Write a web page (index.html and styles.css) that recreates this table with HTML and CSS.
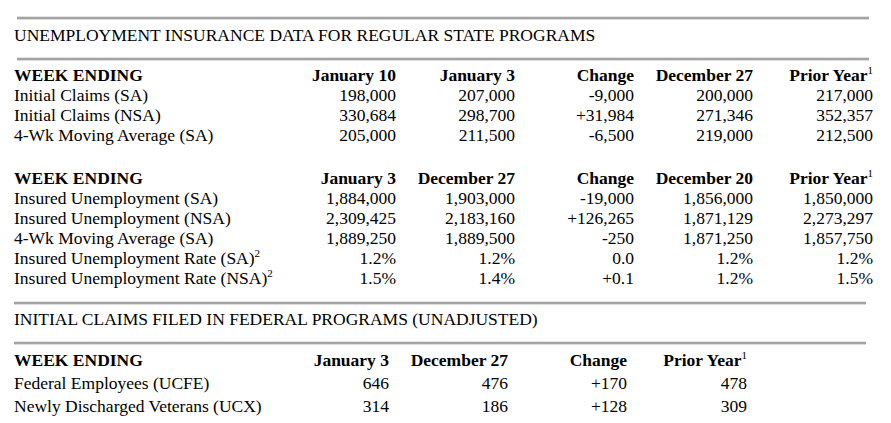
FILE: index.html
```html
<!DOCTYPE html>
<html lang="en">
<head>
<meta charset="utf-8">
<title>Unemployment Insurance Data</title>
<link rel="stylesheet" href="styles.css">
</head>
<body>
<div class="page">
  <section class="block state">
    <div class="rule"></div>
    <h2 class="title">UNEMPLOYMENT INSURANCE DATA FOR REGULAR STATE PROGRAMS</h2>
    <div class="rule"></div>
    <div class="grid g5 first">
      <div class="h l">WEEK ENDING</div><div class="h">January 10</div><div class="h">January 3</div><div class="h">Change</div><div class="h">December 27</div><div class="h">Prior Year<sup>1</sup></div>
      <div class="l">Initial Claims (SA)</div><div>198,000</div><div>207,000</div><div>-9,000</div><div>200,000</div><div>217,000</div>
      <div class="l">Initial Claims (NSA)</div><div>330,684</div><div>298,700</div><div>+31,984</div><div>271,346</div><div>352,357</div>
      <div class="l">4-Wk Moving Average (SA)</div><div>205,000</div><div>211,500</div><div>-6,500</div><div>219,000</div><div>212,500</div>
    </div>
    <div class="grid g5 second">
      <div class="h l">WEEK ENDING</div><div class="h">January 3</div><div class="h">December 27</div><div class="h">Change</div><div class="h">December 20</div><div class="h">Prior Year<sup>1</sup></div>
      <div class="l">Insured Unemployment (SA)</div><div>1,884,000</div><div>1,903,000</div><div>-19,000</div><div>1,856,000</div><div>1,850,000</div>
      <div class="l">Insured Unemployment (NSA)</div><div>2,309,425</div><div>2,183,160</div><div>+126,265</div><div>1,871,129</div><div>2,273,297</div>
      <div class="l">4-Wk Moving Average (SA)</div><div>1,889,250</div><div>1,889,500</div><div>-250</div><div>1,871,250</div><div>1,857,750</div>
      <div class="l">Insured Unemployment Rate (SA)<sup>2</sup></div><div>1.2%</div><div>1.2%</div><div>0.0</div><div>1.2%</div><div>1.2%</div>
      <div class="l">Insured Unemployment Rate (NSA)<sup>2</sup></div><div>1.5%</div><div>1.4%</div><div>+0.1</div><div>1.2%</div><div>1.5%</div>
    </div>
  </section>
  <section class="block federal">
    <div class="rule"></div>
    <h2 class="title">INITIAL CLAIMS FILED IN FEDERAL PROGRAMS (UNADJUSTED)</h2>
    <div class="rule"></div>
    <div class="grid g4">
      <div class="h l">WEEK ENDING</div><div class="h">January 3</div><div class="h">December 27</div><div class="h">Change</div><div class="h">Prior Year<sup>1</sup></div>
      <div class="l">Federal Employees (UCFE)</div><div>646</div><div>476</div><div>+170</div><div>478</div>
      <div class="l">Newly Discharged Veterans (UCX)</div><div>314</div><div>186</div><div>+128</div><div>309</div>
    </div>
  </section>
</div>
</body>
</html>
```

FILE: styles.css
```css
* { box-sizing: border-box; }
html, body { margin: 0; padding: 0; background: #ffffff; }
body {
  font-family: "Liberation Serif", "Times New Roman", serif;
  font-size: 17.5px;
  color: #000000;
}
.page {
  padding: 17px 0 0 14px;
  width: 891px;
}
.rule {
  width: 852px;
  height: 2px;
  background: #a4a4a4;
  box-shadow: 0 1px 0 #dcdcdc, 0 -1px 0 #e4e4e4;
}
.state .rule { margin-left: 3px; }
.title {
  font-size: 17.5px;
  font-weight: normal;
  line-height: 20px;
  margin: 6px 0 13px 0;
}
.federal .title { margin: 5px 0 13px 0; }
.grid {
  display: grid;
  line-height: 20px;
  text-align: right;
  white-space: nowrap;
}
.g5 { grid-template-columns: 263px 119px 119px 119px 119px 120px; }
.g4 { grid-template-columns: 256px 119px 119px 119px 120px; line-height: 23px; margin-top: 5px; }
.first { margin-top: 5px; }
.second { margin-top: 23px; }
.federal { margin-top: 14px; }
.l { text-align: left; }
.h { font-weight: bold; }
sup {
  font-size: 11px;
  line-height: 0;
  vertical-align: 7px;
  font-weight: normal;
}
```
